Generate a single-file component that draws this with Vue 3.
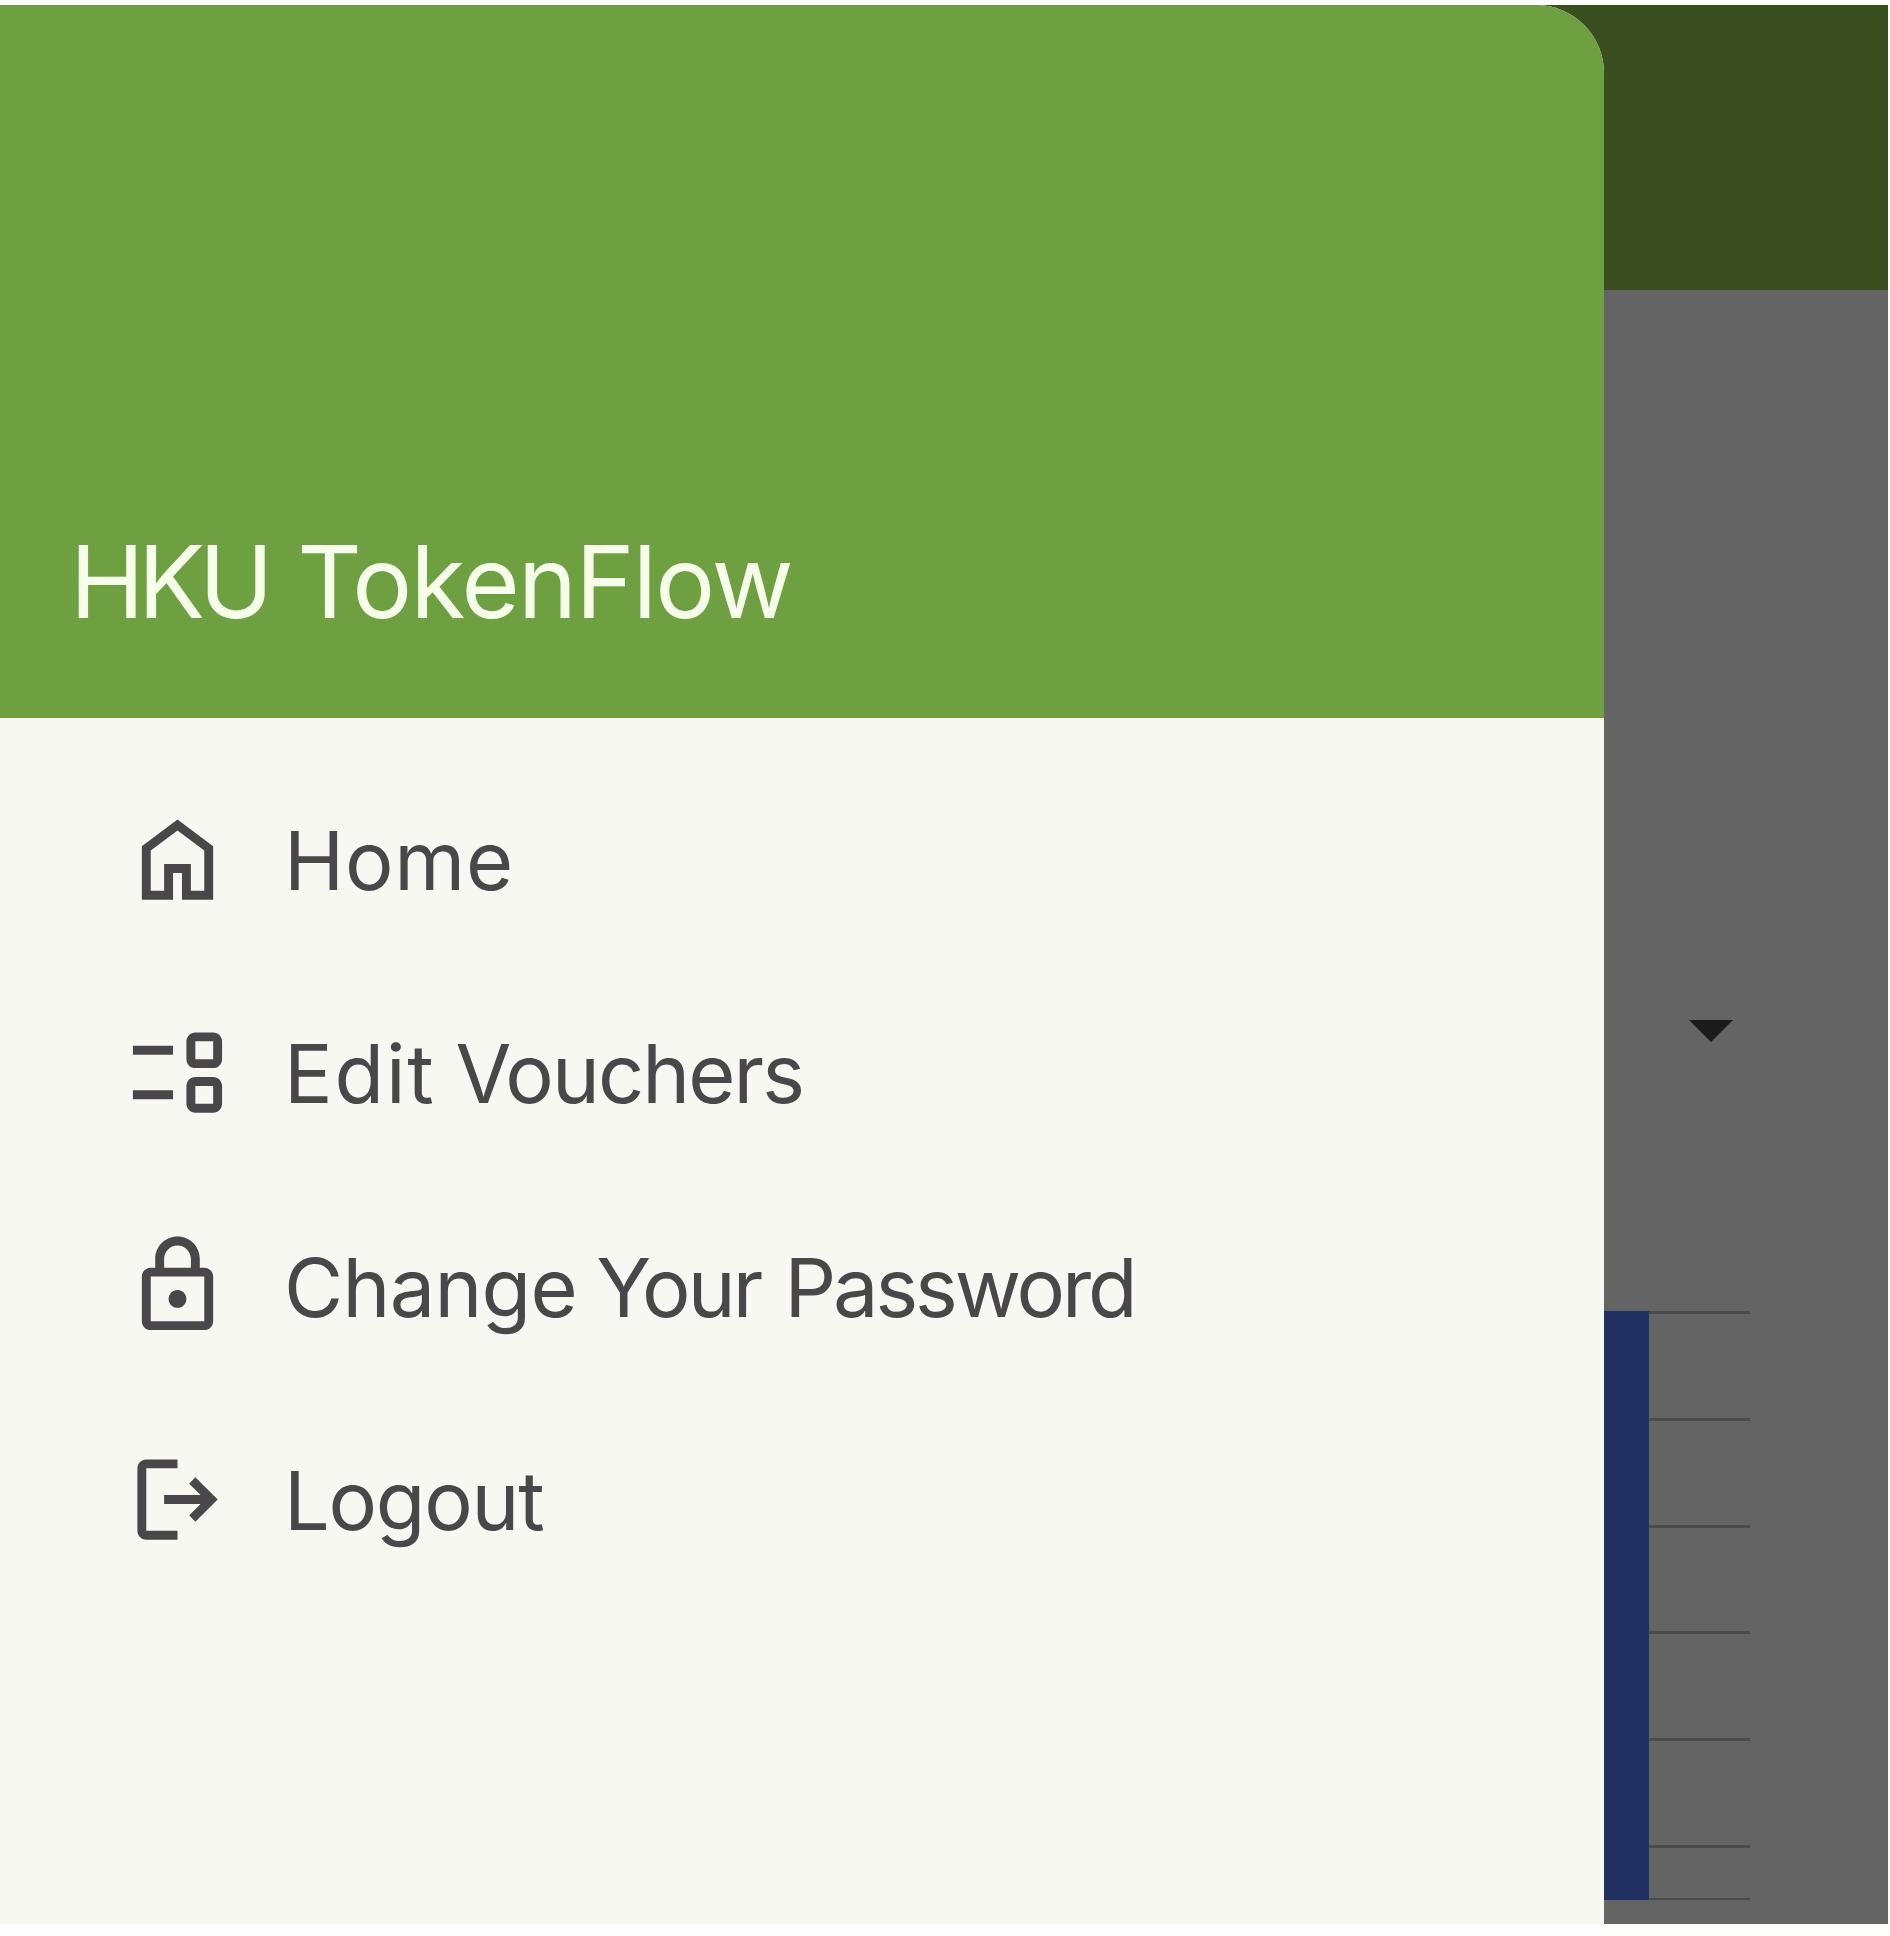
<script setup>
const items = [
  { key: 'home', words: ['Home'] },
  { key: 'edit', words: ['Edit', 'Vouchers'] },
  { key: 'password', words: ['Change', 'Your', 'Password'] },
  { key: 'logout', words: ['Logout'] },
]

const icons = {
  home: 'M6 19h3v-6h6v6h3v-9l-6-4.5L6 10zM4 21V9l8-6 8 6v12h-7v-6h-2v6z',
  edit: 'M2 6h9v2H2zM2 16h9v2H2zM16 11c-1.1 0-2-.9-2-2V5c0-1.1.9-2 2-2h4c1.1 0 2 .9 2 2v4c0 1.1-.9 2-2 2zm0-2h4V5h-4zM16 21c-1.1 0-2-.9-2-2v-4c0-1.1.9-2 2-2h4c1.1 0 2 .9 2 2v4c0 1.1-.9 2-2 2zm0-2h4v-4h-4z',
  password: 'M6 22c-1.1 0-2-.9-2-2V10c0-1.1.9-2 2-2h1V6c0-2.76 2.24-5 5-5s5 2.24 5 5v2h1c1.1 0 2 .9 2 2v10c0 1.1-.9 2-2 2zm0-2h12V10H6zm6-3c1.1 0 2-.9 2-2s-.9-2-2-2-2 .9-2 2 .9 2 2 2zM9 8h6V6c0-1.66-1.34-3-3-3S9 4.34 9 6z',
  logout: 'M5 21c-1.1 0-2-.9-2-2V5c0-1.1.9-2 2-2h7v2H5v14h7v2zM16 17l-1.375-1.45L17.175 13H9v-2h8.175l-2.55-2.55L16 7l5 5z',
}
</script>

<template>
  <div class="screen">
    <div class="drawer-column">
      <aside class="drawer">
        <header class="drawer-header">
          <h1 class="title"><span class="word-hku">HKU</span> <span class="word-tokenflow">TokenFlow</span></h1>
        </header>
        <nav class="menu">
          <a v-for="item in items" :key="item.key" class="menu-item">
            <svg class="icon" viewBox="0 0 24 24"><path fill-rule="evenodd" :d="icons[item.key]" /></svg>
            <span class="label"><template v-for="(word, i) in item.words" :key="word">{{ i ? ' ' : '' }}<span :class="'word-' + word.toLowerCase()">{{ word }}</span></template></span>
          </a>
        </nav>
      </aside>
    </div>
    <main class="backdrop">
      <div class="toolbar"></div>
      <svg class="caret" viewBox="0 0 44 22"><path d="M0 0h44L22 22z" /></svg>
      <div class="chart">
        <div class="bar"></div>
        <div class="grid">
          <div v-for="n in 6" :key="n" class="grid-row" :class="{ last: n === 6 }"></div>
        </div>
      </div>
    </main>
  </div>
</template>

<style>
body {
  margin: 0;
  background: #fdfefb;
}
</style>

<style scoped>
.screen {
  box-sizing: border-box;
  width: 1890px;
  height: 1936px;
  padding: 5px 2px 12px 0;
  display: flex;
  overflow: hidden;
  font-family: Inter, Lato, sans-serif;
}
.drawer-column {
  width: 1604px;
  background: #3a4e20;
}
.drawer {
  height: 100%;
  overflow: hidden;
  border-top-right-radius: 68px;
  background: #f8f8f3;
}
.drawer-header {
  box-sizing: border-box;
  height: 713px;
  padding: 0 0 76px 70px;
  display: flex;
  align-items: flex-end;
  background: #6ea041;
}
.title {
  margin: 0;
  font-size: 100px;
  line-height: 120px;
  font-weight: 400;
  color: #f5ffe9;
  white-space: nowrap;
}
.menu {
  padding-top: 34.4px;
}
.menu-item {
  display: flex;
  align-items: center;
  height: 213.4px;
  padding-left: 124px;
  color: #49474a;
}
.icon {
  width: 107px;
  height: 107px;
  fill: currentColor;
}
.label {
  margin-left: 53px;
  padding-top: 4px;
  font-size: 81px;
  line-height: 100px;
  white-space: nowrap;
}
.word-hku {
  letter-spacing: -6.3px;
}
.word-tokenflow {
  margin-left: 2px;
  letter-spacing: -1.7px;
}
.word-home {
  letter-spacing: 0.8px;
}
.word-edit {
  letter-spacing: 1.8px;
}
.word-vouchers {
  margin-left: -3px;
  letter-spacing: -1.9px;
}
.word-change {
  letter-spacing: -0.7px;
}
.word-your {
  margin-left: -3.7px;
  letter-spacing: -2.9px;
}
.word-password {
  margin-left: 1.3px;
  letter-spacing: -3.1px;
}
.word-logout {
  letter-spacing: -1.25px;
}
.backdrop {
  flex: 1;
  display: flex;
  flex-direction: column;
  background: #646464;
}
.toolbar {
  height: 285px;
  background: #3a4e20;
}
.caret {
  width: 44px;
  height: 22px;
  margin: 730px 0 0 85px;
  fill: #1b1b1b;
}
.chart {
  display: flex;
  height: 589px;
  margin-top: 269px;
}
.bar {
  width: 45px;
  background: #213162;
}
.grid {
  width: 101px;
}
.grid-row {
  box-sizing: border-box;
  height: 106.8px;
  border-top: 3px solid #4b4b4b;
}
.grid-row.last {
  height: 55px;
  border-bottom: 2px solid #4b4b4b;
}
</style>
